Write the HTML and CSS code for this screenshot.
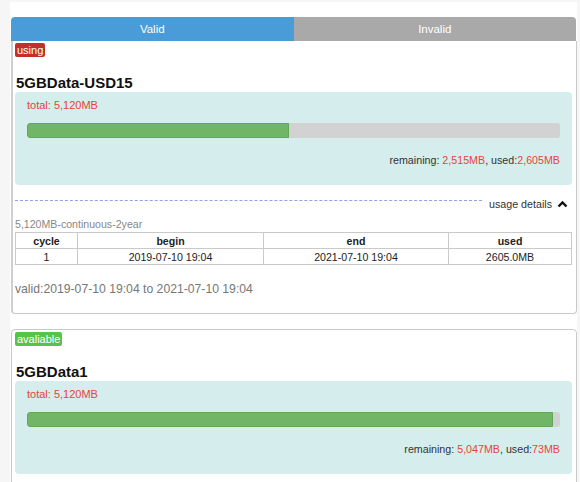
FILE: index.html
```
<!DOCTYPE html>
<html>
<head>
  <title>Data Packages</title>
  <meta charset="UTF-8" />
  <meta name="viewport" content="width=device-width, initial-scale=1" />
  <link rel="stylesheet" href="styles.css">
</head>
<body>
  <div class="page">
    <div class="tabs">
      <div class="tab active">Valid</div>
      <div class="tab">Invalid</div>
    </div>

    <div class="card card-first">
      <span class="badge badge-using">using</span>
      <h3 class="plan-name">5GBData-USD15</h3>
      <div class="usage-box">
        <div class="total">total: 5,120MB</div>
        <div class="bar"><div class="bar-fill" style="width: 49.1%"></div></div>
        <div class="remaining">remaining: <span class="red">2,515MB</span>, used:<span class="red">2,605MB</span></div>
      </div>

      <div class="details-row">
        <span class="dash-line"></span>
        <span class="details-toggle">usage details
          <svg class="chevron" width="11" height="8" viewBox="0 0 11 8">
            <polyline points="1.5,6.5 5.5,2.5 9.5,6.5" fill="none" stroke="#111" stroke-width="2.4" />
          </svg>
        </span>
      </div>

      <div class="plan-type">5,120MB-continuous-2year</div>
      <table class="cycles">
        <tr>
          <th class="col-cycle">cycle</th>
          <th class="col-begin">begin</th>
          <th class="col-end">end</th>
          <th>used</th>
        </tr>
        <tr>
          <td>1</td>
          <td>2019-07-10 19:04</td>
          <td>2021-07-10 19:04</td>
          <td>2605.0MB</td>
        </tr>
      </table>
      <div class="valid-range">valid:2019-07-10 19:04 to 2021-07-10 19:04</div>
    </div>

    <div class="card card-second">
      <span class="badge badge-free">avaliable</span>
      <h3 class="plan-name">5GBData1</h3>
      <div class="usage-box">
        <div class="total">total: 5,120MB</div>
        <div class="bar"><div class="bar-fill" style="width: 98.6%"></div></div>
        <div class="remaining">remaining: <span class="red">5,047MB</span>, used:<span class="red">73MB</span></div>
      </div>
      <div class="spacer"></div>
    </div>
  </div>
</body>
</html>
```

FILE: styles.css
```
body {
  margin: 0;
  padding: 0;
  background-color: #f6f6f6;
  font-family: "Liberation Sans", Arial, sans-serif;
  color: #222;
}

.page {
  margin: 2px 3px 0 10px;
  padding: 15px 0 0 1px;
  background-color: #fff;
  min-height: 480px;
}

/* Tabs */
.tabs {
  display: flex;
  margin-right: 1px;
}

.tab {
  flex: 1;
  height: 24px;
  line-height: 24px;
  text-align: center;
  font-size: 11.5px;
  color: #fff;
  background-color: #a9a9a9;
  border-radius: 0 4px 0 0;
}

.tab.active {
  background-color: #4a9cd9;
  border-radius: 4px 0 0 0;
}

/* Cards */
.card {
  border: 1px solid #c9c9c9;
  padding: 2px 4px 0 3px;
}

.card-first {
  border-top: none;
  border-left: 2px solid #cfcfcf;
  border-radius: 0 0 4px 4px;
  padding-left: 2px;
  padding-top: 2px;
  padding-bottom: 15px;
}

.card-second {
  margin-top: 15px;
  border-radius: 4px;
}

.badge {
  display: block;
  width: fit-content;
  height: 14px;
  line-height: 14px;
  padding: 0 2px;
  font-size: 11px;
  color: #fff;
  border-radius: 2px;
}

.badge-using {
  background-color: #c1312a;
}

.badge-free {
  background-color: #56c34b;
}

.plan-name {
  margin: 17px 0 0 1px;
  font-size: 15px;
  line-height: 18px;
  font-weight: bold;
  color: #111;
}

/* Usage box */
.usage-box {
  background-color: #d6eded;
  border-radius: 4px;
  padding: 5px 12px 17px 12px;
}

.total {
  font-size: 11px;
  line-height: 16px;
  color: #e8433b;
}

.bar {
  margin-top: 10px;
  height: 15px;
  background-color: #d2d2d2;
  border-radius: 3px;
  overflow: hidden;
}

.bar-fill {
  height: 100%;
  box-sizing: border-box;
  background-color: #70b666;
  border: 1px solid #60a858;
  border-radius: 3px 0 0 3px;
}

.remaining {
  margin-top: 14px;
  text-align: right;
  font-size: 10.7px;
  line-height: 16px;
  color: #333;
}

.red {
  color: #e8433b;
}

/* Details toggle */
.details-row {
  display: flex;
  margin-top: 10px;
  height: 17px;
}

.dash-line {
  flex: 1;
  margin-top: 5px;
  height: 0;
  border-top: 1px dashed #8ea4e6;
}

.details-toggle {
  display: flex;
  align-items: center;
  margin: 0 4px 0 7px;
  font-size: 10.7px;
  color: #333;
  gap: 5px;
}

.plan-type {
  margin-top: 5px;
  font-size: 10.6px;
  line-height: 15px;
  color: #888;
}

/* Table */
.cycles {
  width: 557px;
  border-collapse: collapse;
  font-size: 10.6px;
  color: #222;
}

.cycles th,
.cycles td {
  border: 1px solid #c9c9c9;
  height: 15px;
  padding: 0;
  text-align: center;
  line-height: 14px;
}

.col-cycle {
  width: 61px;
}

.col-begin {
  width: 185px;
}

.col-end {
  width: 184px;
}

.valid-range {
  margin-top: 16px;
  font-size: 12.2px;
  line-height: 17px;
  color: #777;
}

.spacer {
  height: 30px;
}
```
